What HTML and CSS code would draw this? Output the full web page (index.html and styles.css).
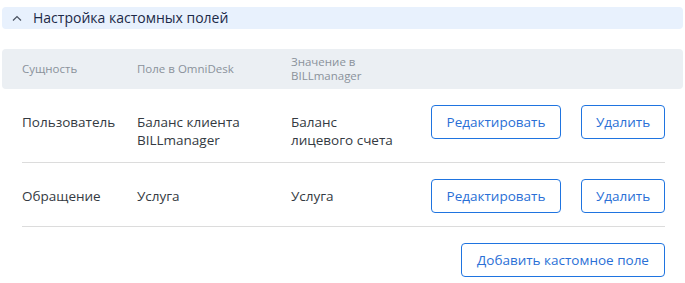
FILE: index.html
```html
<!DOCTYPE html>
<html lang="ru">
<head>
<meta charset="utf-8">
<link rel="stylesheet" href="styles.css">
</head>
<body>
<div class="page">
  <div class="section-head">
    <svg class="chev" width="10" height="6" viewBox="0 0 10 6"><path d="M1 5.5 L5 1.5 L9 5.5" fill="none" stroke="#4a5260" stroke-width="1.2"/></svg>
    <span class="section-title">Настройка кастомных полей</span>
  </div>
  <div class="table">
    <div class="thead">
      <div class="th">Сущность</div>
      <div class="th">Поле в OmniDesk</div>
      <div class="th">Значение в<br>BILLmanager</div>
      <div></div>
    </div>
    <div class="row">
      <div class="td">Пользователь</div>
      <div class="td">Баланс клиента<br>BILLmanager</div>
      <div class="td">Баланс<br>лицевого счета</div>
      <div class="actions">
        <button class="btn btn-edit">Редактировать</button>
        <button class="btn btn-del">Удалить</button>
      </div>
    </div>
    <div class="row">
      <div class="td">Обращение</div>
      <div class="td">Услуга</div>
      <div class="td">Услуга</div>
      <div class="actions">
        <button class="btn btn-edit">Редактировать</button>
        <button class="btn btn-del">Удалить</button>
      </div>
    </div>
    <div class="footer">
      <button class="btn btn-add">Добавить кастомное поле</button>
    </div>
  </div>
</div>
</body>
</html>
```
FILE: styles.css
```css
* { box-sizing: border-box; }
html, body { margin: 0; padding: 0; background: #fff; }
body {
  font-family: "Open Sans", "Noto Sans", sans-serif;
  color: #343a42;
}
.page {
  padding: 7px 2px 0 2px;
}
.section-head {
  height: 22px;
  background: #e8f1fd;
  border-radius: 4px;
  display: flex;
  align-items: center;
  padding-left: 10px;
}
.chev { display: block; margin-right: 11px; margin-top: -1px; }
.section-title {
  font-size: 14px;
  color: #1c2a48;
  line-height: 18px;
}
.table { margin-top: 20px; }
.thead {
  height: 40px;
  background: #ebeff3;
  border-radius: 4px;
  display: grid;
  grid-template-columns: 115px 154px 140px 1fr;
  align-items: center;
  padding: 0 20px;
}
.th {
  font-size: 11.5px;
  line-height: 14px;
  color: #8a929b;
}
.row {
  display: grid;
  grid-template-columns: 115px 154px 140px 1fr;
  align-items: start;
  margin: 0 18px 0 20px;
  padding: 16px 0 13px;
  border-bottom: 1px solid #dcdcdc;
}
.td {
  font-size: 13.5px;
  line-height: 18px;
  padding-top: 8px;
  color: #343a42;
}
.actions {
  display: flex;
  justify-content: flex-end;
  gap: 20px;
}
.btn {
  font-family: "Open Sans", "Noto Sans", sans-serif;
  font-size: 13.5px;
  height: 34px;
  border: 1px solid #1f74e0;
  border-radius: 4px;
  background: #fff;
  color: #2a6fd6;
  padding: 0;
  cursor: pointer;
}
.btn-edit { width: 130px; }
.btn-del { width: 84px; }
.btn-add { width: 204px; }
.footer {
  display: flex;
  justify-content: flex-end;
  margin: 16px 18px 0 20px;
}
```
